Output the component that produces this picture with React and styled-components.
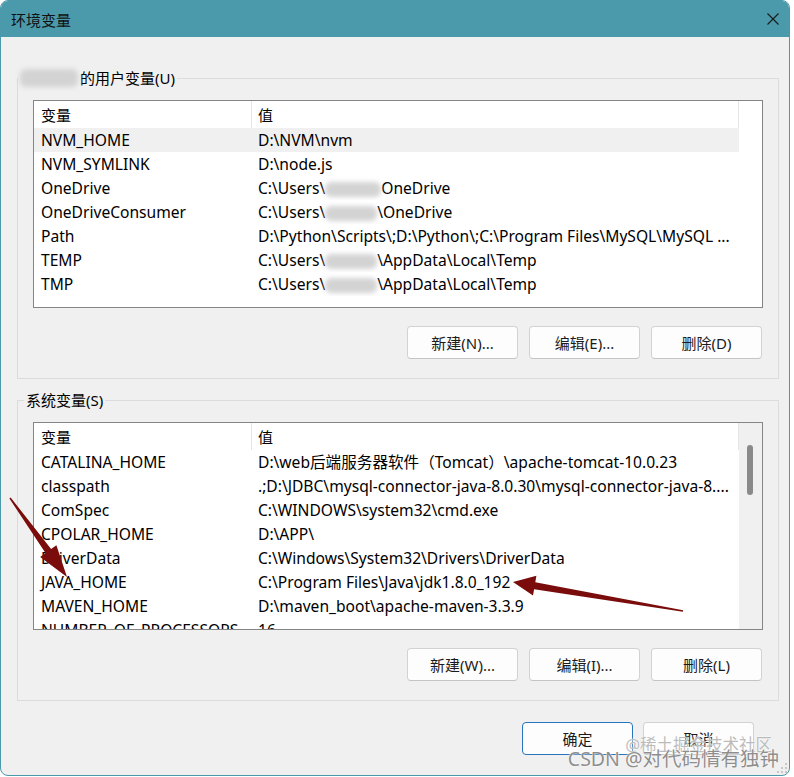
import React from 'react';
import styled, { createGlobalStyle } from 'styled-components';

const Global = createGlobalStyle`
  html, body { margin: 0; padding: 0; background: #ffffff; }
  body { font-family: "Noto Sans", "Noto Sans CJK SC", sans-serif; color: #000; }
  * { box-sizing: border-box; }
`;

const Window = styled.div`
  position: relative;
  width: 790px;
  height: 776px;
  border: 1px solid #4a9aab;
  border-radius: 8px;
  overflow: hidden;
  background: #f0f0f0;
  display: flex;
  flex-direction: column;
`;

const TitleBar = styled.div`
  height: 36px;
  flex: none;
  background: #4b9aab;
  display: flex;
  align-items: center;
  justify-content: space-between;
  padding: 0 10px 0 10px;
`;

const Title = styled.span`
  font-size: 15px;
  color: #111;
  font-family: "Noto Sans CJK SC", sans-serif;
`;

const Content = styled.div`
  flex: 1;
  display: flex;
  flex-direction: column;
  padding: 31px 10px 0 16px;
`;

const Group = styled.fieldset`
  margin: ${(p) => (p.$first ? '0' : '11px')} 0 0 0;
  padding: 12px 15px 19px 15px;
  border: 1px solid #dcdcdc;
  min-width: 0;
  display: flex;
  flex-direction: column;
`;

const Legend = styled.legend`
  font-size: 15px;
  line-height: 20px;
  padding: 0 2px;
  margin-left: ${(p) => p.$offset}px;
  font-family: "Noto Sans", "Noto Sans CJK SC", sans-serif;
  display: flex;
  align-items: center;
`;

const Blob = styled.span`
  display: inline-block;
  width: ${(p) => p.$w}px;
  height: ${(p) => p.$h || 16}px;
  margin: 0 ${(p) => p.$mr || 0}px 0 ${(p) => p.$ml || 0}px;
  background: #d3d3d3;
  filter: blur(2.5px);
  border-radius: 6px;
  vertical-align: middle;
`;

const List = styled.div`
  height: 208px;
  border: 1px solid #858585;
  background: #fff;
  display: flex;
  overflow: hidden;
`;

const Table = styled.div`
  width: 705px;
  flex: none;
  display: flex;
  flex-direction: column;
`;

const HeaderRow = styled.div`
  height: 27px;
  flex: none;
  display: flex;
`;

const HeaderCell = styled.div`
  width: ${(p) => p.$w}px;
  flex: none;
  padding-left: ${(p) => p.$pl}px;
  padding-top: 1px;
  border-right: 1px solid #e5e5e5;
  font-size: 15px;
  line-height: 26px;
  font-family: "Noto Sans CJK SC", sans-serif;
`;

const Row = styled.div`
  height: 24px;
  flex: none;
  display: flex;
  background: ${(p) => (p.$sel ? '#f0f0f0' : 'transparent')};
`;

const Cell = styled.div`
  width: ${(p) => p.$w}px;
  flex: none;
  padding-left: ${(p) => p.$pl}px;
  padding-top: 1px;
  font-size: 15.6px;
  line-height: 23px;
  white-space: nowrap;
  overflow: hidden;
`;

const Gutter = styled.div`
  flex: 1;
  background: ${(p) => (p.$scroll ? '#f0f0f0' : '#fff')};
  padding: 22px 0 0 8px;
`;

const Thumb = styled.div`
  width: 6px;
  height: 50px;
  background: #8a8a8a;
  border-radius: 3px;
`;

const ButtonRow = styled.div`
  display: flex;
  justify-content: flex-end;
  gap: ${(p) => p.$gap}px;
  margin-top: ${(p) => p.$mt}px;
  padding-right: ${(p) => p.$pr}px;
`;

const Button = styled.button`
  width: 111px;
  height: 33px;
  background: #fdfdfd;
  border: 1px solid ${(p) => (p.$primary ? '#2a73bd' : '#d2d2d2')};
  border-bottom-color: ${(p) => (p.$primary ? '#2a73bd' : '#c4c4c4')};
  border-radius: 4px;
  font-size: 15px;
  font-family: "Noto Sans", "Noto Sans CJK SC", sans-serif;
  color: #1b1b1b;
  padding: 0;
  margin: 0;
`;

const CloseIcon = styled.svg`
  width: 12px;
  height: 12px;
  display: block;
`;

const Overlay = styled.svg`
  position: absolute;
  left: -1px;
  top: -1px;
  pointer-events: none;
`;

const Watermark = styled.div`
  position: absolute;
  right: ${(p) => p.$r}px;
  top: ${(p) => p.$t}px;
  font-size: ${(p) => p.$fs}px;
  line-height: 1;
  white-space: nowrap;
  color: ${(p) => p.$color};
  font-family: "Noto Sans", "Noto Sans CJK SC", sans-serif;
  text-shadow: 0 0 1px #ffffff, 0 0 2px rgba(255, 255, 255, 0.9);
  pointer-events: none;
`;

const userVars = [
  ['NVM_HOME', 'D:\\NVM\\nvm'],
  ['NVM_SYMLINK', 'D:\\node.js'],
  ['OneDrive', ['C:\\Users\\', 56, 'OneDrive']],
  ['OneDriveConsumer', ['C:\\Users\\', 52, '\\OneDrive']],
  ['Path', 'D:\\Python\\Scripts\\;D:\\Python\\;C:\\Program Files\\MySQL\\MySQL ...'],
  ['TEMP', ['C:\\Users\\', 52, '\\AppData\\Local\\Temp']],
  ['TMP', ['C:\\Users\\', 52, '\\AppData\\Local\\Temp']],
];

const sysVars = [
  ['CATALINA_HOME', 'D:\\web后端服务器软件（Tomcat）\\apache-tomcat-10.0.23'],
  ['classpath', '.;D:\\JDBC\\mysql-connector-java-8.0.30\\mysql-connector-java-8....'],
  ['ComSpec', 'C:\\WINDOWS\\system32\\cmd.exe'],
  ['CPOLAR_HOME', 'D:\\APP\\'],
  ['DriverData', 'C:\\Windows\\System32\\Drivers\\DriverData'],
  ['JAVA_HOME', 'C:\\Program Files\\Java\\jdk1.8.0_192'],
  ['MAVEN_HOME', 'D:\\maven_boot\\apache-maven-3.3.9'],
  ['NUMBER_OF_PROCESSORS', '16'],
];

function Value({ v }) {
  if (typeof v === 'string') return v;
  return (
    <>
      {v[0]}
      <Blob $w={v[1]} $h={15} />
      {v[2]}
    </>
  );
}

function VarList({ rows, scroll }) {
  return (
    <List>
      <Table>
        <HeaderRow>
          <HeaderCell $w={218} $pl={7}>变量</HeaderCell>
          <HeaderCell $w={487} $pl={6}>值</HeaderCell>
        </HeaderRow>
        {rows.map(([k, v], i) => (
          <Row key={k} $sel={!scroll && i === 0}>
            <Cell $w={218} $pl={7}>{k}</Cell>
            <Cell $w={487} $pl={6}><Value v={v} /></Cell>
          </Row>
        ))}
      </Table>
      <Gutter $scroll={scroll}>{scroll && <Thumb />}</Gutter>
    </List>
  );
}

export default function App() {
  return (
    <>
      <Global />
      <Window>
        <TitleBar>
          <Title>环境变量</Title>
          <CloseIcon viewBox="0 0 12 12">
            <path d="M0.5 0.5 L11.5 11.5 M11.5 0.5 L0.5 11.5" stroke="#1a1a1a" strokeWidth="1.1" />
          </CloseIcon>
        </TitleBar>
        <Content>
          <Group $first>
            <Legend $offset={-15}>
              <Blob $w={58} $h={18} $mr={2} />
              的用户变量(U)
            </Legend>
            <VarList rows={userVars} />
            <ButtonRow $gap={11} $mt={18} $pr={1}>
              <Button>新建(N)...</Button>
              <Button>编辑(E)...</Button>
              <Button>删除(D)</Button>
            </ButtonRow>
          </Group>
          <Group>
            <Legend $offset={-9}>系统变量(S)</Legend>
            <VarList rows={sysVars} scroll />
            <ButtonRow $gap={11} $mt={18} $pr={1}>
              <Button>新建(W)...</Button>
              <Button>编辑(I)...</Button>
              <Button>删除(L)</Button>
            </ButtonRow>
          </Group>
          <ButtonRow $gap={10} $mt={21} $pr={25}>
            <Button $primary>确定</Button>
            <Button>取消</Button>
          </ButtonRow>
        </Content>
        <Overlay width="790" height="776" viewBox="0 0 790 776">
          <polygon
            points="10.6,497.5 51.1,549 56.4,545.2 67,577 40.2,556.9 45.5,553 9.4,498.5"
            fill="#7a0c0c"
          />
          <polygon
            points="513,582 536.4,575.8 535.3,582.2 683.1,610.2 682.9,611.8 534.1,589.2 533,595.6"
            fill="#7a0c0c"
          />
          <g fill="#c8c8c8">
            <rect x="785" y="763" width="2" height="2" />
            <rect x="781" y="767" width="2" height="2" />
            <rect x="785" y="767" width="2" height="2" />
            <rect x="777" y="771" width="2" height="2" />
            <rect x="781" y="771" width="2" height="2" />
            <rect x="785" y="771" width="2" height="2" />
          </g>
        </Overlay>
        <Watermark $r={17} $t={736} $fs={16.5} $color="rgba(175,175,175,0.85)">@稀土掘金技术社区</Watermark>
        <Watermark $r={10} $t={748} $fs={19.5} $color="#8e8e8e">CSDN @对代码情有独钟</Watermark>
      </Window>
    </>
  );
}
